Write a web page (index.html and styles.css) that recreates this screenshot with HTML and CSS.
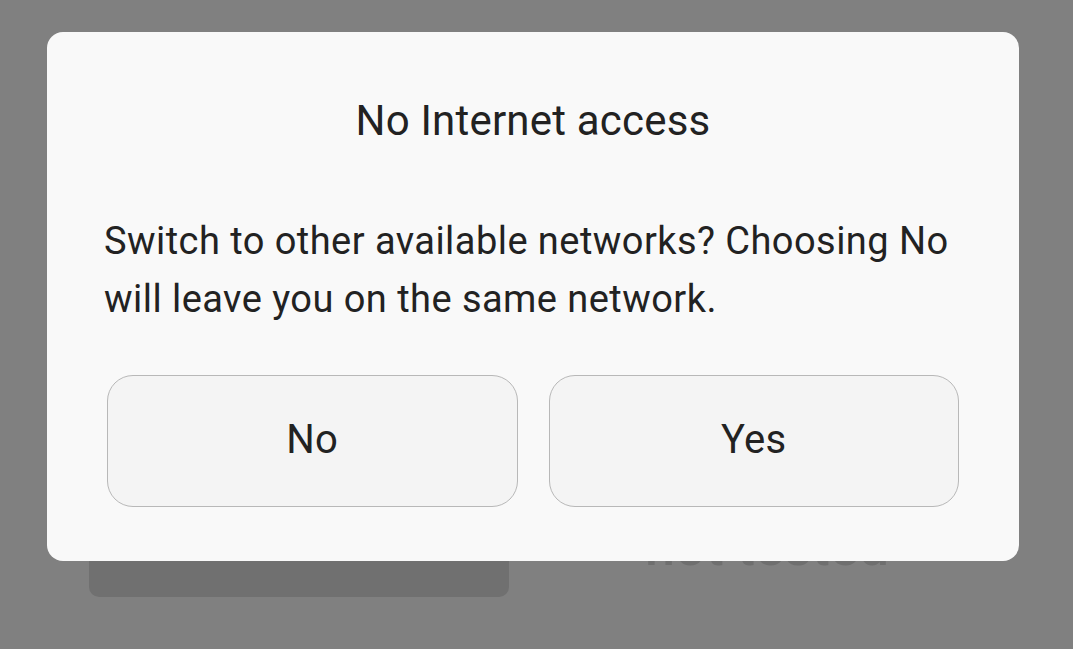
FILE: index.html
```html
<!DOCTYPE html>
<html>
<head>
<meta charset="utf-8">
<link rel="stylesheet" href="styles.css">
</head>
<body>
<div class="screen">
  <div class="backdrop">
    <div class="bg-row">
      <div class="bg-card"></div>
      <div class="bg-label">not tested</div>
    </div>
  </div>
  <div class="dialog">
    <div class="title">No Internet access</div>
    <div class="message">Switch to other available networks? Choosing No will leave you on the same network.</div>
    <div class="actions">
      <div class="btn">No</div>
      <div class="btn">Yes</div>
    </div>
  </div>
</div>
</body>
</html>
```
FILE: styles.css
```css
html, body {
  margin: 0;
  padding: 0;
}
body {
  width: 1073px;
  height: 649px;
  overflow: hidden;
  background: #808080;
  font-family: Roboto, "Noto Sans", sans-serif;
}
.screen {
  position: relative;
  width: 1073px;
  height: 649px;
}
.backdrop {
  padding-top: 420px;
}
.bg-row {
  display: flex;
  align-items: flex-end;
  padding-left: 89px;
}
.bg-card {
  width: 420px;
  height: 177px;
  background: #707070;
  border-radius: 10px;
}
.bg-label {
  margin-left: 136px;
  margin-bottom: 20px;
  font-size: 54px;
  font-weight: 500;
  color: #6f6f6f;
  line-height: 60px;
}
.dialog {
  position: absolute;
  left: 47px;
  top: 32px;
  width: 972px;
  height: 529px;
  box-sizing: border-box;
  background: #f9f9f9;
  border-radius: 16px;
  padding: 64px 57px 0 57px;
  color: #222222;
}
.title {
  text-align: center;
  font-size: 42px;
  line-height: 50px;
  letter-spacing: 0.2px;
}
.message {
  margin-top: 66px;
  font-size: 38px;
  line-height: 58px;
  letter-spacing: 0.45px;
}
.actions {
  display: flex;
  gap: 31px;
  margin-top: 47px;
  padding: 0 3px;
}
.btn {
  flex: 1;
  height: 132px;
  box-sizing: border-box;
  border: 1px solid #b8b8b8;
  border-radius: 26px;
  background: #f4f4f4;
  display: flex;
  align-items: center;
  justify-content: center;
  padding-bottom: 4px;
  font-size: 40px;
  letter-spacing: 0.3px;
  color: #222222;
}
```
